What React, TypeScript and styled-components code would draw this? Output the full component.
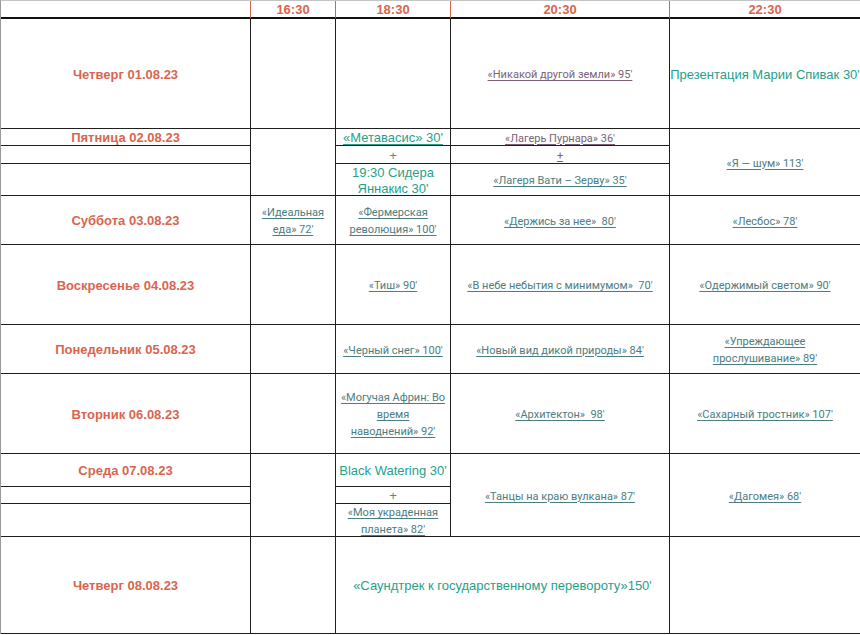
import React from "react";
import styled, { createGlobalStyle } from "styled-components";

const Global = createGlobalStyle`
  html, body { margin: 0; padding: 0; background: #fff; }
  body { font-family: "Liberation Sans", Arial, sans-serif; }
`;

const RED = "#d9654f";
const TEAL = "#27a08a";
const SLATE = "#4d7c81";
const MAUVE = "#7b6177";
const LINE = "#1f1f1f";

const Table = styled.div`
  display: grid;
  grid-template-columns: 250px 85px 115px 219px 190px;
  grid-template-rows: 18px 110px 17px 18px 32px 49px 80px 49px 80px 33px 17px 33px 97px;
  border-top: 1px solid #c4c4c4;
  border-left: 1px solid #9a9a9a;
  width: 860px;
  box-sizing: border-box;
  overflow: hidden;
`;

type Place = { $c: number; $r: number; $cs?: number; $rs?: number; $last?: boolean };

const Cell = styled.div<Place>`
  grid-column: ${(p) => p.$c} / span ${(p) => p.$cs ?? 1};
  grid-row: ${(p) => p.$r} / span ${(p) => p.$rs ?? 1};
  box-sizing: border-box;
  border-right: ${(p) => (p.$last ? "none" : `1px solid ${LINE}`)};
  border-bottom: 1px solid ${LINE};
  display: flex;
  align-items: center;
  justify-content: center;
  text-align: center;
  padding: 2px 2px 0;
  min-width: 0;
`;

const HeadCell = styled.div<{ $last?: boolean }>`
  grid-row: 1;
  box-sizing: border-box;
  border-right: ${(p) => (p.$last ? "none" : `1px solid ${RED}`)};
  border-bottom: 2px solid #111;
  display: flex;
  align-items: center;
  justify-content: center;
  font: bold 13px/1 "Liberation Sans", Arial, sans-serif;
  color: ${RED};
`;

const Day = styled.span`
  font: bold 13px/16px "Liberation Sans", Arial, sans-serif;
  color: ${RED};
  white-space: nowrap;
`;

const Film = styled.span<{ $mauve?: boolean }>`
  font: 11px/17px Roboto, "Noto Sans", sans-serif;
  color: ${(p) => (p.$mauve ? MAUVE : SLATE)};
  text-decoration: underline;
  text-underline-offset: 2px;
  text-decoration-thickness: 1px;
`;

const Event = styled.span<{ $underline?: boolean; $nowrap?: boolean }>`
  font: 13px/16px "Liberation Sans", Arial, sans-serif;
  color: ${TEAL};
  text-decoration: ${(p) => (p.$underline ? "underline" : "none")};
  text-underline-offset: 2px;
  white-space: ${(p) => (p.$nowrap ? "nowrap" : "pre-line")};
`;

export default function App() {
  return (
    <>
      <Global />
      <Table>
        <HeadCell />
        <HeadCell>16:30</HeadCell>
        <HeadCell>18:30</HeadCell>
        <HeadCell>20:30</HeadCell>
        <HeadCell $last>22:30</HeadCell>

        {/* Четверг 01.08 */}
        <Cell $c={1} $r={2}><Day>Четверг 01.08.23</Day></Cell>
        <Cell $c={2} $r={2} />
        <Cell $c={3} $r={2} />
        <Cell $c={4} $r={2}><Film $mauve>«Никакой другой земли» 95'</Film></Cell>
        <Cell $c={5} $r={2} $last><Event $nowrap>Презентация Марии Спивак 30'</Event></Cell>

        {/* Пятница 02.08 */}
        <Cell $c={1} $r={3}><Day>Пятница 02.08.23</Day></Cell>
        <Cell $c={1} $r={4} />
        <Cell $c={1} $r={5} />
        <Cell $c={2} $r={3} $rs={3} />
        <Cell $c={3} $r={3}><Event $underline>«Метавасис» 30'</Event></Cell>
        <Cell $c={3} $r={4}><Event>+</Event></Cell>
        <Cell $c={3} $r={5}><Event>{"19:30 Сидера\nЯннакис 30'"}</Event></Cell>
        <Cell $c={4} $r={3}><Film $mauve>«Лагерь Пурнара» 36'</Film></Cell>
        <Cell $c={4} $r={4}><Film $mauve>+</Film></Cell>
        <Cell $c={4} $r={5}><Film>«Лагеря Вати – Зерву» 35'</Film></Cell>
        <Cell $c={5} $r={3} $rs={3} $last><Film>«Я — шум» 113'</Film></Cell>

        {/* Суббота 03.08 */}
        <Cell $c={1} $r={6}><Day>Суббота 03.08.23</Day></Cell>
        <Cell $c={2} $r={6}><Film>«Идеальная еда» 72'</Film></Cell>
        <Cell $c={3} $r={6}><Film>«Фермерская революция» 100'</Film></Cell>
        <Cell $c={4} $r={6}><Film>«Держись за нее»&nbsp; 80'</Film></Cell>
        <Cell $c={5} $r={6} $last><Film>«Лесбос» 78'</Film></Cell>

        {/* Воскресенье 04.08 */}
        <Cell $c={1} $r={7}><Day>Воскресенье 04.08.23</Day></Cell>
        <Cell $c={2} $r={7} />
        <Cell $c={3} $r={7}><Film>«Тиш» 90'</Film></Cell>
        <Cell $c={4} $r={7}><Film>«В небе небытия с минимумом»&nbsp; 70'</Film></Cell>
        <Cell $c={5} $r={7} $last><Film>«Одержимый светом» 90'</Film></Cell>

        {/* Понедельник 05.08 */}
        <Cell $c={1} $r={8}><Day>Понедельник 05.08.23</Day></Cell>
        <Cell $c={2} $r={8} />
        <Cell $c={3} $r={8}><Film>«Черный снег» 100'</Film></Cell>
        <Cell $c={4} $r={8}><Film>«Новый вид дикой природы» 84'</Film></Cell>
        <Cell $c={5} $r={8} $last><Film>«Упреждающее<br />прослушивание» 89'</Film></Cell>

        {/* Вторник 06.08 */}
        <Cell $c={1} $r={9}><Day>Вторник 06.08.23</Day></Cell>
        <Cell $c={2} $r={9} />
        <Cell $c={3} $r={9}><Film>«Могучая Африн: Во<br />время<br />наводнений» 92'</Film></Cell>
        <Cell $c={4} $r={9}><Film>«Архитектон»&nbsp; 98'</Film></Cell>
        <Cell $c={5} $r={9} $last><Film>«Сахарный тростник» 107'</Film></Cell>

        {/* Среда 07.08 */}
        <Cell $c={1} $r={10}><Day>Среда 07.08.23</Day></Cell>
        <Cell $c={1} $r={11} />
        <Cell $c={1} $r={12} />
        <Cell $c={2} $r={10} $rs={3} />
        <Cell $c={3} $r={10}><Event>Black Watering 30'</Event></Cell>
        <Cell $c={3} $r={11}><Event>+</Event></Cell>
        <Cell $c={3} $r={12}><Film>«Моя украденная<br />планета» 82'</Film></Cell>
        <Cell $c={4} $r={10} $rs={3}><Film>«Танцы на краю вулкана» 87'</Film></Cell>
        <Cell $c={5} $r={10} $rs={3} $last><Film>«Дагомея» 68'</Film></Cell>

        {/* Четверг 08.08 */}
        <Cell $c={1} $r={13}><Day>Четверг 08.08.23</Day></Cell>
        <Cell $c={2} $r={13} />
        <Cell $c={3} $r={13} $cs={2}><Event>«Саундтрек к государственному перевороту»150'</Event></Cell>
        <Cell $c={5} $r={13} $last />
      </Table>
    </>
  );
}
